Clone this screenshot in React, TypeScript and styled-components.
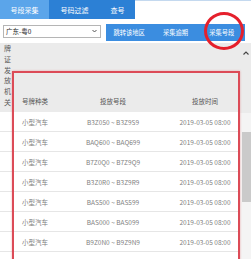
import React from 'react';
import styled, { createGlobalStyle } from 'styled-components';

const GlobalStyle = createGlobalStyle`
  body {
    margin: 0;
    background: #fff;
    font-family: "Noto Sans CJK SC", "Noto Sans", sans-serif;
  }
`;

const Page = styled.div`
  position: relative;
  width: 251px;
  height: 259px;
  overflow: hidden;
  display: flex;
  flex-direction: column;
  background: #fff;
`;

const TabBar = styled.div`
  display: flex;
  height: 19px;
  flex-shrink: 0;
  border-top: 1px solid #c4d9ef;
  box-sizing: border-box;
`;

const Tab = styled.div<{ $active?: boolean; $w: number }>`
  width: ${(p) => p.$w}px;
  margin-top: -1px;
  height: 19px;
  display: flex;
  align-items: center;
  justify-content: center;
  font-size: 7px;
  color: #fff;
  background: ${(p) => (p.$active ? '#5ba5ea' : '#2c80d5')};
`;

const ControlRow = styled.div`
  display: flex;
  align-items: center;
  height: 24px;
  padding-left: 3px;
  flex-shrink: 0;
`;

const Select = styled.div`
  width: 98px;
  height: 13px;
  box-sizing: border-box;
  border: 1px solid #b5b5b5;
  display: flex;
  align-items: center;
  justify-content: space-between;
  padding: 0 3px 0 2px;
  font-size: 6.5px;
  color: #222;
`;

const Toolbar = styled.div`
  display: flex;
  width: 139px;
  height: 17px;
  margin-left: 5px;
  margin-top: 2px;
  background: #3b8de0;
`;

const ToolButton = styled.div`
  flex: 1;
  display: flex;
  align-items: center;
  justify-content: center;
  font-size: 6.3px;
  color: #fff;
`;

const Panel = styled.div`
  flex: 1;
  display: flex;
  background: #ebebeb;
`;

const Content = styled.div`
  width: 238px;
  display: flex;
  flex-direction: column;
`;

const Head = styled.div`
  display: flex;
  align-items: flex-end;
  height: 69px;
  flex-shrink: 0;
`;

const SideLabel = styled.div`
  width: 14px;
  padding-left: 4px;
  align-self: flex-start;
  display: flex;
  flex-direction: column;
  font-size: 7px;
  line-height: 10.8px;
  color: #5a5a5a;
`;

const HeadGrid = styled.div`
  flex: 1;
  display: grid;
  grid-template-columns: 55px 80px 1fr;
  height: 22px;
  align-items: center;
  font-size: 6.5px;
  color: #555;
`;

const Rows = styled.div`
  background: #fff;
  flex: 1;
`;

const Row = styled.div`
  display: grid;
  grid-template-columns: 73px 80px 1fr;
  height: 20px;
  align-items: center;
  border-bottom: 1px solid #e6e6e6;
  box-sizing: border-box;
  font-size: 6.5px;
  color: #808080;
`;

const Cell = styled.div<{ $first?: boolean; $last?: boolean; $pad?: number }>`
  text-align: ${(p) => (p.$first ? 'left' : 'center')};
  padding-left: ${(p) => p.$pad ?? (p.$first ? 22 : p.$last ? 19 : 0)}px;
  white-space: nowrap;
`;

const Scrollbar = styled.div`
  flex: 1;
  display: flex;
  flex-direction: column;
  align-items: center;
  background: linear-gradient(#ebebeb 0, #ebebeb 70px, #f4f4f4 70px);
`;

const ScrollArrow = styled.div`
  height: 20px;
  display: flex;
  align-items: center;
  padding-left: 3px;
`;

const Thumb = styled.div`
  width: 9px;
  height: 70px;
  margin-top: 69px;
  margin-left: 3px;
  background: #cacaca;
`;

const MarkBox = styled.div`
  position: absolute;
  left: 12px;
  top: 71px;
  width: 228px;
  height: 200px;
  box-sizing: border-box;
  border: 2px solid #dc4b57;
  box-shadow: 0 0 2px rgba(220, 75, 87, 0.45);
`;

const MarkCircle = styled.div`
  position: absolute;
  left: 204px;
  top: 12px;
  width: 40px;
  height: 38px;
  box-sizing: border-box;
  border: 3px solid #e5202c;
  border-radius: 50%;
`;

const ranges = [
  'B3Z050 ~ B3Z9S9',
  'BAQ600 ~ BAQ699',
  'B7Z0Q0 ~ B7Z9Q9',
  'B3Z0R0 ~ B3Z9R9',
  'BAS500 ~ BAS599',
  'BAS000 ~ BAS099',
  'B9Z0N0 ~ B9Z9N9',
];

const App = () => {
  return (
    <Page>
      <GlobalStyle />
      <TabBar>
        <Tab $active $w={49}>号段采集</Tab>
        <Tab $w={51}>号码过滤</Tab>
        <Tab $w={35}>查号</Tab>
      </TabBar>
      <ControlRow>
        <Select>
          <span>广东-粤0</span>
          <svg width="5" height="4" viewBox="0 0 5 4">
            <path d="M0.5 1 L2.5 3 L4.5 1" stroke="#555" strokeWidth="1" fill="none" />
          </svg>
        </Select>
        <Toolbar>
          <ToolButton>跳转该地区</ToolButton>
          <ToolButton>采集逾期</ToolButton>
          <ToolButton>采集号段</ToolButton>
        </Toolbar>
      </ControlRow>
      <Panel>
        <Content>
          <Head>
            <SideLabel>
              {'牌证发放机关'.split('').map((c, i) => (
                <span key={i}>{c}</span>
              ))}
            </SideLabel>
            <HeadGrid>
              <Cell $first $pad={4}>号牌种类</Cell>
              <Cell>投放号段</Cell>
              <Cell $last>投放时间</Cell>
            </HeadGrid>
          </Head>
          <Rows>
            {ranges.map((r, i) => (
              <Row key={i}>
                <Cell $first>小型汽车</Cell>
                <Cell>{r}</Cell>
                <Cell $last>2019-03-05 08:00</Cell>
              </Row>
            ))}
          </Rows>
        </Content>
        <Scrollbar>
          <ScrollArrow>
            <svg width="6" height="4" viewBox="0 0 6 4">
              <path d="M0.5 3.5 L3 1 L5.5 3.5" stroke="#444" strokeWidth="1.1" fill="none" />
            </svg>
          </ScrollArrow>
          <Thumb />
        </Scrollbar>
      </Panel>
      <MarkBox />
      <MarkCircle />
    </Page>
  );
};

export default App;
